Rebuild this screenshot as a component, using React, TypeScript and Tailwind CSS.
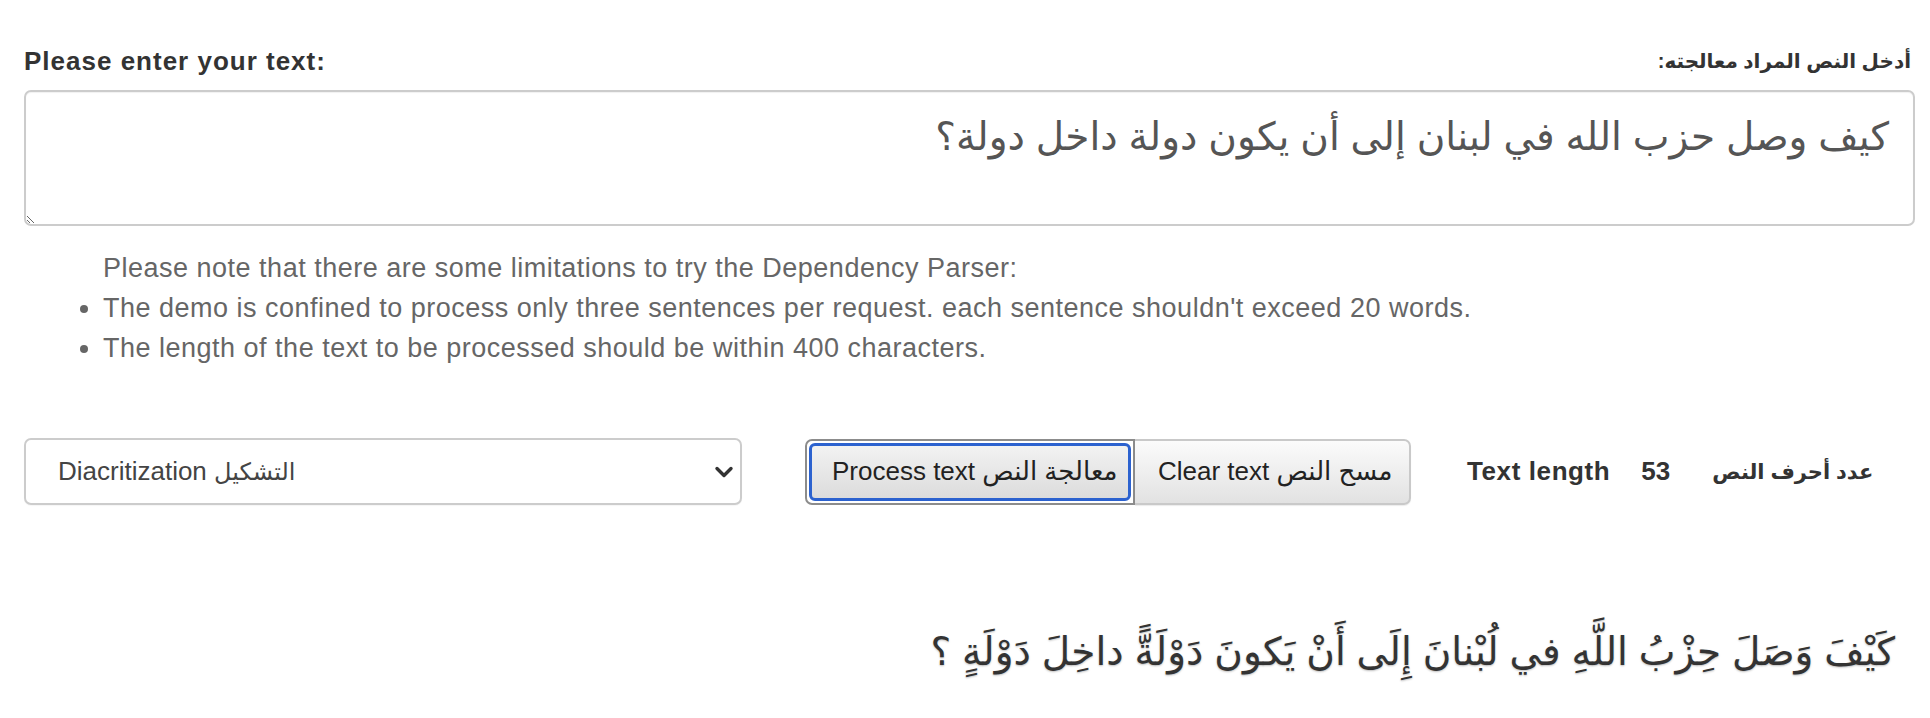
import React from "react";

const SANS = "font-['Liberation_Sans','DejaVu_Sans',Arial,sans-serif]";

export default function App() {
  return (
    <div className={`w-[1930px] min-h-[718px] bg-white pl-6 pr-[15px] pt-[44px] text-[#333] ${SANS}`}>
      {/* labels */}
      <div className="flex items-center justify-between h-[34px] mb-[12px]">
        <label className="text-[26px] font-bold tracking-[1px] leading-[34px] text-[#333]">
          Please enter your text:
        </label>
        <label dir="rtl" className="text-[20px] font-bold leading-[34px] text-[#333] pr-[4px]">
          أدخل النص المراد معالجته:
        </label>
      </div>

      {/* textarea */}
      <textarea
        dir="rtl"
        defaultValue="كيف وصل حزب الله في لبنان إلى أن يكون دولة داخل دولة؟"
        className="block w-full h-[136px] border-2 border-[#cccccc] rounded-[7px] bg-white pt-[21px] pr-[24px] pl-3 text-[39px] leading-[48px] text-[#555] shadow-[inset_0_1px_1px_rgba(0,0,0,0.06)] outline-none resize-y font-['Liberation_Sans','DejaVu_Sans',Arial,sans-serif]"
      />

      {/* notes */}
      <div className="mt-[22px] text-[27px] tracking-[0.5px] leading-[40px] text-[#666]">
        <p className="pl-[79px]">Please note that there are some limitations to try the Dependency Parser:</p>
        <ul className="list-disc pl-[79px]">
          <li>The demo is confined to process only three sentences per request. each sentence shouldn't exceed 20 words.</li>
          <li>The length of the text to be processed should be within 400 characters.</li>
        </ul>
      </div>

      {/* controls */}
      <div className="mt-[70px] flex items-center h-[67px]">
        <div className="w-[718px] h-[67px] border-2 border-[#cccccc] rounded-[7px] bg-white flex items-center justify-between pl-[32px] pr-[6px] shadow-[0_1px_1px_rgba(0,0,0,0.04)]">
          <span className="text-[26px] text-[#444]">
            Diacritization <span className="text-[24px]">التشكيل</span>
          </span>
          <svg width="20" height="14" viewBox="0 0 20 14" aria-hidden="true">
            <path d="M3 3.5 L10 10.5 L17 3.5" fill="none" stroke="#333" strokeWidth="3.4" strokeLinecap="round" strokeLinejoin="round" />
          </svg>
        </div>

        <div className="ml-[63px] flex h-[66px]">
          <button className="w-[330px] h-[66px] rounded-l-[7px] border-2 border-[#8c8c8c] p-[2px] bg-white">
            <span className="flex items-center justify-start h-full w-full rounded-[6px] border-[3px] border-[#2c62cf] bg-gradient-to-b from-[#f2f2f2] to-[#dcdcdc] pl-[20px] text-[26px] text-[#222]">
              Process text معالجة النص
            </span>
          </button>
          <button className="w-[276px] h-[66px] rounded-r-[7px] border-2 border-l-0 border-[#c9c9c9] bg-gradient-to-b from-[#fbfbfb] to-[#e2e2e2] pl-[23px] text-left text-[26px] text-[#222] shadow-[0_1px_1px_rgba(0,0,0,0.08)]">
            Clear text مسح النص
          </button>
        </div>

        <span className="ml-[56px] text-[26px] font-bold tracking-[0.6px] text-[#333]">Text length</span>
        <span className="ml-[31px] text-[26px] font-bold text-[#333]">53</span>
        <span dir="rtl" className="ml-[42px] text-[21px] font-bold text-[#333]">عدد أحرف النص</span>
      </div>

      {/* result */}
      <div
        dir="rtl"
        className="mt-[117px] pr-[20px] text-[39px] leading-[60px] text-[#333] [text-shadow:0_1px_2px_rgba(0,0,0,0.25)]"
      >
        كَيْفَ وَصَلَ حِزْبُ اللَّهِ في لُبْنانَ إِلَى أَنْ يَكونَ دَوْلَةًّ داخِلَ دَوْلَةٍ ؟
      </div>
    </div>
  );
}
